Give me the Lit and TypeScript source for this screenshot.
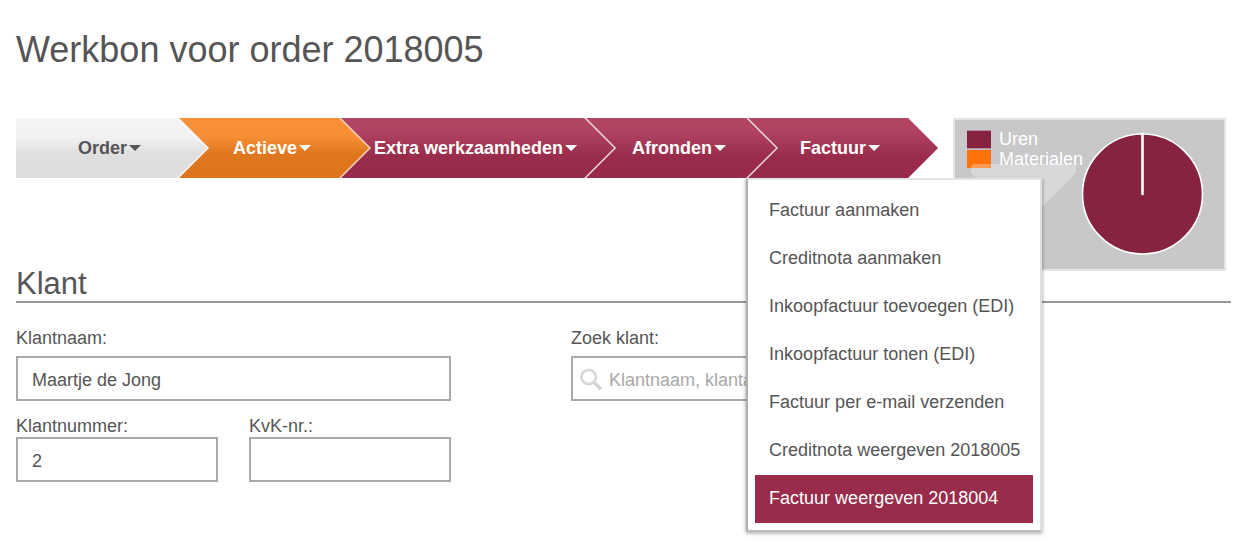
import { LitElement, html, css, svg, nothing } from "lit";
import { customElement, state } from "lit/decorators.js";
import { classMap } from "lit/directives/class-map.js";

interface Step {
  label: string;
  tone: "done" | "active" | "open";
  items?: string[];
}

const STEPS: Step[] = [
  { label: "Order", tone: "done" },
  { label: "Actieve", tone: "active" },
  { label: "Extra werkzaamheden", tone: "open" },
  { label: "Afronden", tone: "open" },
  {
    label: "Factuur",
    tone: "open",
    items: [
      "Factuur aanmaken",
      "Creditnota aanmaken",
      "Inkoopfactuur toevoegen (EDI)",
      "Inkoopfactuur tonen (EDI)",
      "Factuur per e-mail verzenden",
      "Creditnota weergeven 2018005",
      "Factuur weergeven 2018004",
    ],
  },
];

@customElement("step-bar")
export class StepBar extends LitElement {
  @state() private open = "Factuur";
  @state() private current = "Factuur weergeven 2018004";

  static styles = css`
    :host {
      display: block;
    }
    .steps {
      display: flex;
      margin: 0;
      padding: 0;
      list-style: none;
    }
    .step {
      position: relative;
      min-width: 192px;
      margin-left: -30px;
    }
    .step:first-child {
      min-width: 193px;
      margin-left: 0;
    }
    .step:nth-child(1) { z-index: 5; }
    .step:nth-child(2) { z-index: 4; }
    .step:nth-child(3) { z-index: 3; }
    .step:nth-child(4) { z-index: 2; }
    .step:nth-child(5) { z-index: 1; min-width: 190px; }
    .trigger {
      position: relative;
      display: flex;
      align-items: center;
      justify-content: center;
      gap: 2px;
      width: 100%;
      height: 60px;
      margin: 0;
      padding: 0 39px 0 33px;
      border: 0;
      background: none;
      color: #fff;
      font: bold 18px/20px "Liberation Sans", Arial, sans-serif;
      white-space: nowrap;
      cursor: pointer;
    }
    .trigger::before,
    .trigger::after {
      content: "";
      position: absolute;
      z-index: -1;
      inset: 0;
      clip-path: polygon(0 0, calc(100% - 30px) 0, 100% 50%, calc(100% - 30px) 100%, 0 100%);
    }
    .trigger::before {
      background: #f3dfe2;
    }
    .trigger::after {
      right: 2px;
      background: linear-gradient(#b14663 0%, #b04462 20%, #992c4a 65%, #962a48 100%);
    }
    .step:last-child .trigger::after {
      right: 0;
    }
    .step:last-child .trigger::before {
      background: none;
    }
    .active .trigger::before {
      background: #f8d9bd;
    }
    .active .trigger::after {
      background: linear-gradient(#f89138 0%, #f68f36 30%, #de771e 60%, #dd751c 100%);
    }
    .done .trigger {
      color: #555;
    }
    .done .trigger::before {
      background: #fafafa;
    }
    .done .trigger::after {
      background: linear-gradient(#f4f4f4 0%, #f2f2f2 30%, #dfdfdf 60%, #dedede 100%);
    }
    .caret {
      width: 12px;
      height: 6px;
      background: currentColor;
      clip-path: polygon(0 0, 100% 0, 50% 100%);
    }
    .menu {
      position: absolute;
      top: 60px;
      left: -2px;
      margin: 0;
      padding: 7px;
      border: 2px solid;
      border-color: #e4e4e4 #e0e0e0 #bbb #b0b0b0;
      background: #fff;
      box-shadow: 0 1px 4px rgba(0, 0, 0, 0.4);
      list-style: none;
      clip-path: inset(0 -8px -8px -8px);
    }
    .item {
      display: block;
      padding: 0 13px 2px 14px;
      color: #555;
      font-size: 18px;
      line-height: 46px;
      text-decoration: none;
      white-space: nowrap;
    }
    .item.current {
      background: #992c4a;
      color: #fff;
    }
  `;

  render() {
    return html`<ul class="steps">
      ${STEPS.map(
        (step) => html`<li class=${classMap({ step: true, [step.tone]: true })}>
          <button
            class="trigger"
            aria-expanded=${this.open === step.label}
            @click=${() => (this.open = this.open === step.label ? "" : step.label)}
          >
            ${step.label}<span class="caret"></span>
          </button>
          ${step.items && this.open === step.label ? this.menu(step.items) : nothing}
        </li>`
      )}
    </ul>`;
  }

  private menu(items: string[]) {
    return html`<ul class="menu">
      ${items.map(
        (item) => html`<li>
          <a
            href="#"
            class=${classMap({ item: true, current: item === this.current })}
            @mouseenter=${() => (this.current = item)}
            >${item}</a
          >
        </li>`
      )}
    </ul>`;
  }
}

@customElement("hours-chart")
export class HoursChart extends LitElement {
  static styles = css`
    :host {
      position: relative;
      display: flex;
      box-sizing: border-box;
      width: 273px;
      height: 153px;
      padding: 9px 0 0 12px;
      border: 2px solid #e4e4e6;
      background: #c8c8ca;
      color: #fff;
      font-size: 18px;
    }
    .legend {
      flex: none;
      width: 116px;
      margin: 0;
      padding: 0;
      list-style: none;
    }
    .entry {
      display: flex;
      align-items: center;
      gap: 8px;
      height: 20px;
      line-height: 20px;
    }
    .swatch {
      box-sizing: border-box;
      width: 24px;
      height: 19px;
      border: solid #b98a9a;
      border-width: 1px 0;
      background: #852340;
    }
    .swatch.materials {
      height: 18px;
      border: 0;
      background: #ff720a;
    }
    .pie {
      flex: none;
      width: 120px;
      height: 120px;
      margin-top: 5px;
      overflow: visible;
    }
    .mark {
      position: absolute;
      left: 16px;
      top: 44px;
      width: 105px;
      height: 62px;
    }
  `;

  render() {
    return html`
      <ul class="legend">
        <li class="entry"><span class="swatch"></span>Uren</li>
        <li class="entry"><span class="swatch materials"></span>Materialen</li>
      </ul>
      <svg class="pie" viewBox="0 0 120 120" role="img" aria-label="Uren 100%">
        ${svg`<circle cx="59.5" cy="60" r="60" fill="#852340" stroke="#fff" stroke-width="1.6" />
          <path d="M59.5 0V60" stroke="#fff" stroke-width="2.6" stroke-linecap="round" />`}
      </svg>
      <svg class="mark" viewBox="0 0 105 62" aria-hidden="true">
        ${svg`<path d="M2 0H103L105 2V9L52.500 61.500L0 9V2Z" fill="#fff" fill-opacity=".3" />`}
      </svg>
    `;
  }
}

@customElement("app-root")
export class AppRoot extends LitElement {
  static styles = css`
    :host {
      display: block;
      box-sizing: border-box;
      min-height: 100vh;
      padding: 30px 11px 24px 16px;
      background: #fff;
      color: #555;
      font-family: "Liberation Sans", Arial, sans-serif;
      font-size: 18px;
    }
    .title {
      margin: 0 0 48px;
      font-size: 36px;
      font-weight: normal;
      line-height: 40px;
    }
    .progress {
      display: flex;
      align-items: flex-start;
      gap: 15px;
    }
    .bar {
      position: relative;
      z-index: 1;
    }
    .section {
      margin: 0;
      padding-bottom: 4px;
      border-bottom: 2px solid #999;
      font-size: 31px;
      font-weight: normal;
      line-height: 26px;
    }
    .form {
      display: grid;
      grid-template-columns: minmax(0, 435px) minmax(0, 435px);
      gap: 120px;
      padding-top: 25px;
    }
    .pair {
      display: grid;
      grid-template-columns: 1fr 1fr;
      gap: 31px;
      padding-top: 15px;
    }
    .label {
      display: block;
      margin-bottom: 8px;
      line-height: 20px;
    }
    .pair .label {
      margin-bottom: 1px;
    }
    .input {
      display: block;
      box-sizing: border-box;
      width: 100%;
      height: 45px;
      margin: 0;
      padding: 4px 14px 0;
      border: 2px solid #a9a9a9;
      border-radius: 0;
      background: #fff;
      color: #555;
      font: inherit;
    }
    .search {
      position: relative;
    }
    .search .input {
      padding-left: 36px;
    }
    .input::placeholder {
      color: #a9a9a9;
      opacity: 1;
    }
    .glass {
      position: absolute;
      left: 8px;
      top: 11px;
      width: 24px;
      height: 24px;
    }
  `;

  render() {
    return html`
      <h1 class="title">Werkbon voor order 2018005</h1>
      <div class="progress">
        <step-bar class="bar"></step-bar>
        <hours-chart></hours-chart>
      </div>
      <h2 class="section">Klant</h2>
      <form class="form">
        <div>
          <label class="label" for="name">Klantnaam:</label>
          <input class="input" id="name" type="text" value="Maartje de Jong" />
          <div class="pair">
            <div>
              <label class="label" for="number">Klantnummer:</label>
              <input class="input" id="number" type="text" value="2" />
            </div>
            <div>
              <label class="label" for="kvk">KvK-nr.:</label>
              <input class="input" id="kvk" type="text" />
            </div>
          </div>
        </div>
        <div>
          <label class="label" for="find">Zoek klant:</label>
          <div class="search">
            <input class="input" id="find" type="text" placeholder="Klantnaam, klantadres" />
            <svg class="glass" viewBox="0 0 24 24" aria-hidden="true">
              <circle cx="9.700" cy="10" r="7.200" fill="none" stroke="#d9d9d9" stroke-width="2.800" />
              <path d="M15.200 15.500L22 22.300" stroke="#d3d3d3" stroke-width="3.600" />
            </svg>
          </div>
        </div>
      </form>
    `;
  }
}
